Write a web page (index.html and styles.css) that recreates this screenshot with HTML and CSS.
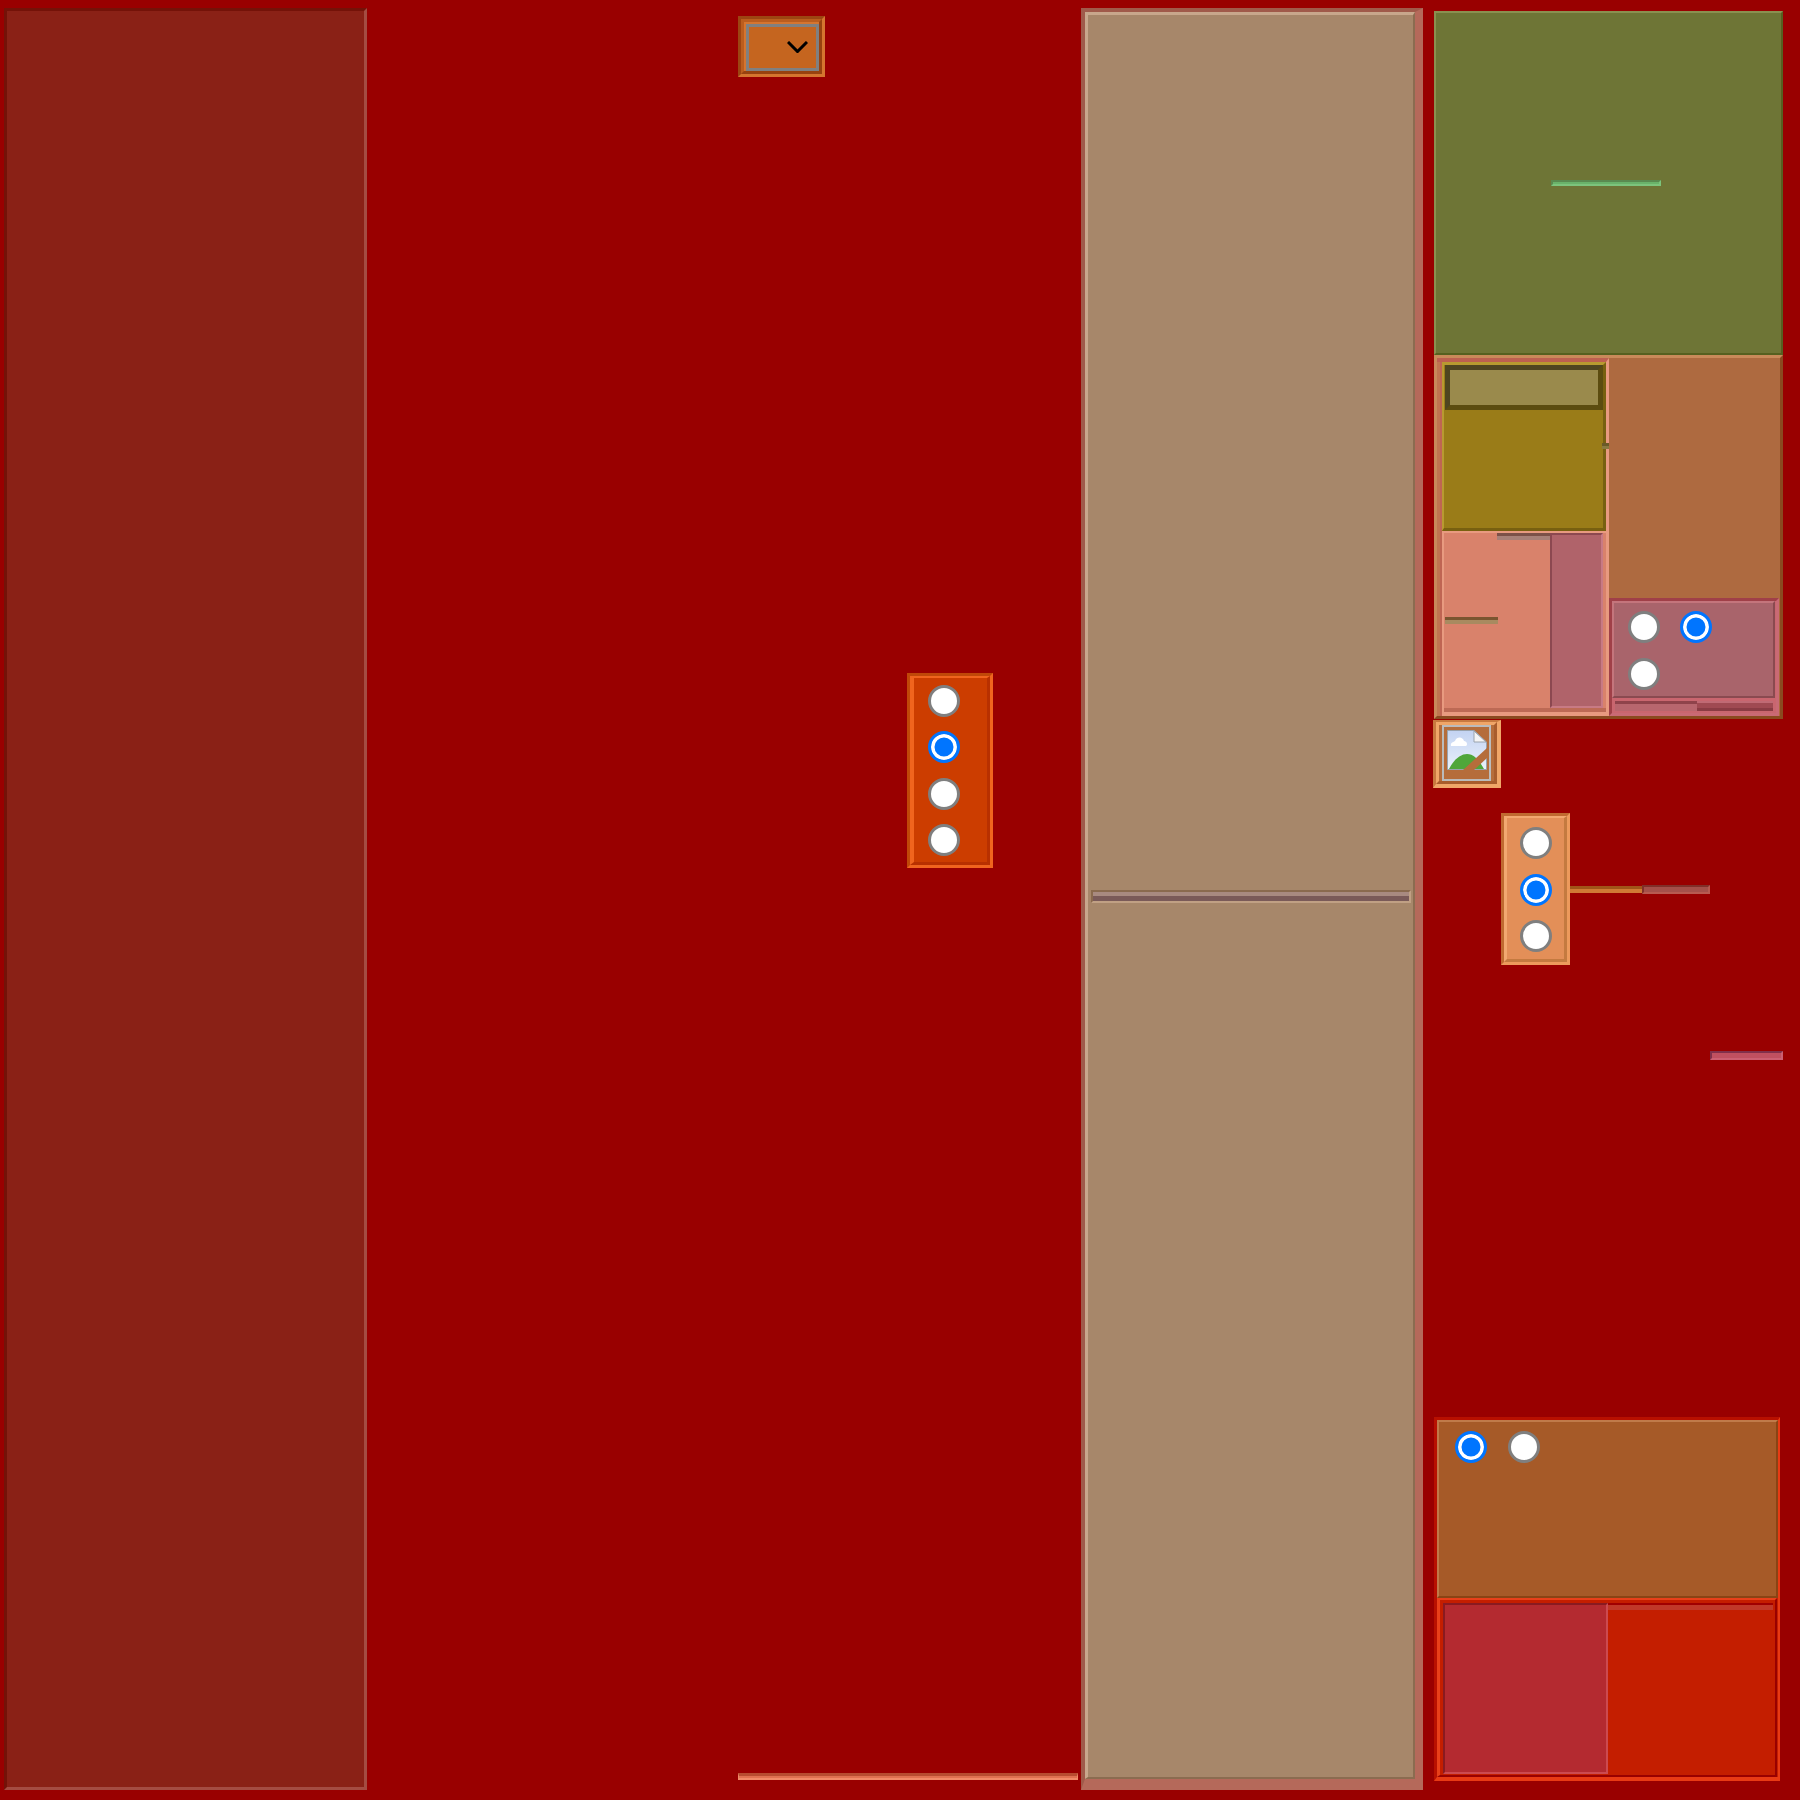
FILE: index.html
```html
<!DOCTYPE html>
<html lang="en">
<head>
  <meta charset="UTF-8" />
  <title>Panels</title>
  <link rel="stylesheet" href="styles.css">
</head>
<body>
  <div class="page">
    <div class="side"></div>

    <div class="mid">
      <div class="picker">
        <div class="picker-inner">
          <div class="picker-box">
            <svg class="chevron" width="21" height="12" viewBox="0 0 21 12"><polyline points="1,1 10.5,10.5 20,1" fill="none" stroke="#000" stroke-width="3"/></svg>
          </div>
        </div>
      </div>
      <div class="radios radios-red">
        <div class="radios-inner">
          <input type="radio" class="radio" name="a">
          <input type="radio" class="radio" name="a" checked>
          <input type="radio" class="radio" name="a">
          <input type="radio" class="radio" name="a">
        </div>
      </div>
      <div class="line"></div>
    </div>

    <div class="tan">
      <div class="tan-inner">
        <div class="tan-split"></div>
      </div>
    </div>

    <div class="right">
      <div class="green"><div class="green-bar"></div></div>

      <div class="combo">
        <div class="combo-left">
          <div class="olive">
            <div class="olive-box"><div class="olive-fill"></div></div>
            <div class="olive-tick"></div>
          </div>
          <div class="salmon">
            <div class="salmon-main">
              <div class="bar-top"></div>
              <div class="bar-left"></div>
            </div>
            <div class="mauve"></div>
          </div>
        </div>
        <div class="combo-right">
          <div class="rose">
            <div class="rose-radios">
              <input type="radio" class="radio" name="b">
              <input type="radio" class="radio" name="b" checked>
              <input type="radio" class="radio" name="b">
            </div>
            <div class="rose-bars">
              <div class="rose-bar-a"></div>
              <div class="rose-bar-b"></div>
            </div>
          </div>
        </div>
      </div>

      <div class="thumb">
        <div class="thumb-inner">
          <div class="thumb-box">
            <svg class="thumb-icon" width="40" height="40" viewBox="0 0 40 40">
              <defs>
                <linearGradient id="sky" x1="0" y1="0" x2="0" y2="1">
                  <stop offset="0" stop-color="#c3d3f2"/>
                  <stop offset="1" stop-color="#eaf1fb"/>
                </linearGradient>
              </defs>
              <polygon points="0.5,0.5 27,0.5 39.5,12 39.5,39.5 0.5,39.5" fill="url(#sky)" stroke="#9aa3ad"/>
              <path d="M4 16 C3 12 7 12 8 11 C10 6 16 7 17 11 C20 11 21 15 19 16 Z" fill="#fff"/>
              <path d="M2 39 C7 29 14 24 20 24 C28 24 33 32 37 39 Z" fill="#4fa63a"/>
              <polygon points="27,1 39,12 27,12" fill="#f4f4f4" stroke="#9aa3ad"/>
              <polygon points="16,40 27,40 40,28 40,18" fill="#b56d3b"/>
            </svg>
          </div>
        </div>
      </div>

      <div class="strip">
        <div class="radios radios-peach">
          <div class="radios-inner">
            <input type="radio" class="radio" name="c">
            <input type="radio" class="radio" name="c" checked>
            <input type="radio" class="radio" name="c">
          </div>
        </div>
        <div class="strip-bar-a"></div>
        <div class="strip-bar-b"></div>
      </div>
      <div class="strip-bar-c"></div>

      <div class="bottom">
        <div class="brown">
          <input type="radio" class="radio" name="d" checked>
          <input type="radio" class="radio" name="d">
        </div>
        <div class="scarlet">
          <div class="crimson"></div>
          <div class="scarlet-side"><div class="scarlet-bar"></div></div>
        </div>
      </div>
    </div>
  </div>
</body>
</html>
```

FILE: styles.css
```css
* {
  box-sizing: border-box;
}

body {
  margin: 0;
  background-color: #990000;
}

.page {
  display: flex;
  height: 1800px;
  padding: 8px 0 10px 4px;
}

.radio {
  appearance: none;
  width: 32px;
  height: 32px;
  margin: 0;
  display: block;
  background: #fff;
  border: 3px solid #7f7f7f;
  border-radius: 50%;
}

.radio:checked {
  background: #0075ff;
  border-color: #0075ff;
  box-shadow: inset 0 0 0 3.5px #fff;
}

/* left column */
.side {
  width: 363px;
  height: 1782px;
  background: #8a2116;
  border: 3px solid;
  border-color: #741208 #a44c42 #a44c42 #741208;
}

/* middle column */
.mid {
  width: 714px;
  display: flex;
  flex-direction: column;
}

.picker {
  margin: 8px 0 0 371px;
  width: 87px;
  height: 61px;
  border: 3px solid;
  border-color: #9c4512 #d5752f #d5752f #9c4512;
}

.picker-inner {
  height: 100%;
  padding: 2px 0 0 2px;
  background: #d5752f;
  border: 3px solid;
  border-color: #bb5d1e #98420f #98420f #bb5d1e;
}

.picker-box {
  height: 100%;
  background: #c5651f;
  border: 3px solid #808080;
  position: relative;
}

.chevron {
  position: absolute;
  left: 38px;
  top: 14px;
}

.radios {
  border: 3px solid;
}

.radios-inner {
  height: 100%;
  display: flex;
  flex-direction: column;
  border-style: solid;
}

.radios-red {
  width: 86px;
  height: 195px;
  margin: 596px 0 0 540px;
  border-color: #c04808 #f0641e #f0641e #c04808;
}

.radios-red .radios-inner {
  gap: 14.3px;
  padding: 7px 0 0 14px;
  background: #cc3d00;
  border-width: 2px 3px 3px 4px;
  border-color: #f0641e #b83000 #b83000 #f0641e;
}

.line {
  margin: auto 0 10px 371px;
  width: 340px;
  height: 7px;
  background: #e07050;
  border: 1px solid #f08a68;
  border-top: 3px solid #b84c30;
  border-bottom-width: 2px;
}

/* tan panel */
.tan {
  width: 342px;
  height: 1782px;
  border-style: solid;
  border-width: 4px 8px 11px 4px;
  border-color: #a05a4a #b5695a #b5695a #a05a4a;
}

.tan-inner {
  height: 100%;
  padding: 875px 2px 0 3px;
  background: #a7876a;
  border-style: solid;
  border-width: 3px 2px 2px 3px;
  border-color: #c8a78c #8b6c50 #8b6c50 #c8a78c;
}

.tan-split {
  width: 320px;
  height: 13px;
  background: #a88a80;
  border: 2px solid;
  border-color: #8a6a4e #c0a084 #c0a084 #8a6a4e;
  box-shadow: inset 0 -5px 0 #7a5a58;
}

/* right column */
.right {
  width: 349px;
  margin-left: 11px;
  padding-top: 3px;
  display: flex;
  flex-direction: column;
}

.green {
  height: 344px;
  background: #6e7536;
  border: 2px solid;
  border-color: #8a9050 #566020 #566020 #8a9050;
  display: flex;
  align-items: center;
  justify-content: center;
}

.green-bar {
  width: 110px;
  height: 6px;
  margin-left: -5px;
  background: #6ab36a;
  border: 2px solid;
  border-color: #5a8a50 #7cc47c #7cc47c #5a8a50;
}

.combo {
  height: 364px;
  display: flex;
  background: #ae6a40;
  border: 3px solid;
  border-color: #c98a5a #8a4a20 #8a4a20 #c98a5a;
}

.combo-left {
  width: 172px;
  padding: 0 0 0 5px;
  background: #c07550;
  border-top: 4px solid #bd6050;
  border-right: 3px solid #e89a80;
}

.olive {
  height: 169px;
  padding-left: 1px;
  background: #9a7c18;
  border-style: solid;
  border-width: 3px 3px 3px 2px;
  border-color: #b89a30 #786010 #786010 #b89a30;
  box-shadow: -2px 0 0 #bf6553;
  position: relative;
}

.olive-box {
  height: 45px;
  border: 5px solid;
  border-color: #4f4520 #5c4c10 #5c4c10 #4f4520;
}

.olive-fill {
  height: 100%;
  background: #9a8a4c;
}

.olive-tick {
  position: absolute;
  right: -6px;
  top: 78px;
  width: 7px;
  height: 6px;
  background: #8a7a40;
  border-top: 3px solid #6a5a28;
}

.salmon {
  height: 185px;
  display: flex;
  padding: 0 3px 8px 0;
  background: #d9826b;
  border-left: 2px solid #e89a80;
  border-top: 2px solid #e89a80;
  box-shadow: inset 0 -4px 0 #e89a80, inset 0 -8px 0 #bd6a55, -2px 0 0 #bf6553;
}

.salmon-main {
  flex: 1;
  position: relative;
}

.bar-top {
  position: absolute;
  right: 0;
  top: 0;
  width: 53px;
  height: 7px;
  background: #a88078;
  border-top: 3px solid #7c5048;
}

.bar-left {
  position: absolute;
  left: 1px;
  top: 84px;
  width: 53px;
  height: 7px;
  background: #a88a60;
  border-top: 3px solid #7a5530;
}

.mauve {
  width: 53px;
  background: #b0636a;
  border: 2px solid;
  border-color: #8c4850 #c87a84 #c87a84 #8c4850;
}

.combo-right {
  flex: 1;
  display: flex;
  align-items: flex-end;
}

.rose {
  width: 170px;
  height: 118px;
  padding-right: 1px;
  background: #c9666f;
  border: 3px solid;
  border-color: #a04048 #c96a75 #c96a75 #a04048;
  display: flex;
  flex-direction: column;
}

.rose-radios {
  height: 97px;
  background: #a9646b;
  border: 2px solid;
  border-color: #c4757c #8a4a50 #8a4a50 #c4757c;
  display: grid;
  grid-template-columns: 32px 32px;
  column-gap: 20px;
  row-gap: 15px;
  padding: 8px 0 0 14px;
  align-content: start;
}

.rose-bars {
  flex: 1;
  display: flex;
  padding: 3px 2px 2px 3px;
}

.rose-bar-a {
  width: 82px;
  background: #b8666e;
  border-top: 3px solid #8f434b;
}

.rose-bar-b {
  flex: 1;
  background: #a04a52;
  border-top: 2px solid #c06a74;
  border-bottom: 3px solid #8a3c44;
}

.thumb {
  width: 68px;
  height: 68px;
  margin: 1px 0 0 -1px;
  border-style: solid;
  border-width: 2px 4px 4px 3px;
  border-color: #c8793f #f0a668 #f0a668 #c8793f;
}

.thumb-inner {
  height: 100%;
  padding: 0 3px;
  background: #b56d3b;
  border: 3px solid;
  border-color: #f0a668 #a85c2c #a85c2c #f0a668;
}

.thumb-box {
  height: 100%;
  padding: 3px;
  border: 2px solid #bbb;
}

.thumb-icon {
  display: block;
}

.strip {
  display: flex;
  align-items: flex-start;
  margin: 25px 0 0 67px;
}

.radios-peach {
  width: 69px;
  height: 152px;
  flex-shrink: 0;
  border-color: #c06a30 #ed9a5c #ed9a5c #c06a30;
}

.radios-peach .radios-inner {
  gap: 14.5px;
  padding: 9px 0 0 13px;
  background: #e38f58;
  border-width: 2px 3px 3px 3px;
  border-color: #f2a870 #c47a40 #c47a40 #f2a870;
}

.strip-bar-a {
  width: 72px;
  height: 7px;
  margin-top: 73px;
  background: #d07a35;
  border-top: 3px solid #a05518;
}

.strip-bar-b {
  width: 68px;
  height: 9px;
  margin-top: 72px;
  background: #a5504a;
  border: 2px solid;
  border-color: #80302a #b85a50 #b85a50 #80302a;
}

.strip-bar-c {
  align-self: flex-end;
  width: 73px;
  height: 9px;
  margin-top: 86px;
  background: #c05060;
  border: 2px solid;
  border-color: #80304a #cc6072 #cc6072 #80304a;
}

.bottom {
  width: 346px;
  height: 364px;
  margin-top: 357px;
  background: #c41e00;
  border-style: solid;
  border-width: 3px 2px 4px 3px;
  border-color: #b81000 #e83a14 #e83a14 #b81000;
}

.brown {
  height: 178px;
  padding: 9px 0 0 16px;
  display: flex;
  gap: 21px;
  align-items: flex-start;
  background: #a65a28;
  border: 2px solid;
  border-color: #c07a4a #8a4414 #8a4414 #c07a4a;
}

.scarlet {
  height: 179px;
  margin-right: 1px;
  display: flex;
  padding: 3px 2px 1px 3px;
  background: #c41e00;
  border-style: solid;
  border-width: 2px 2px 2px 3px;
  border-color: #e8401a #990000 #990000 #e8401a;
}

.crimson {
  width: 165px;
  background: #b42a30;
  border: 2px solid;
  border-color: #8a1a20 #cc4a50 #cc4a50 #8a1a20;
}

.scarlet-side {
  flex: 1;
}

.scarlet-bar {
  height: 7px;
  background: #c03828;
  border-top: 2px solid #a00000;
}
```
